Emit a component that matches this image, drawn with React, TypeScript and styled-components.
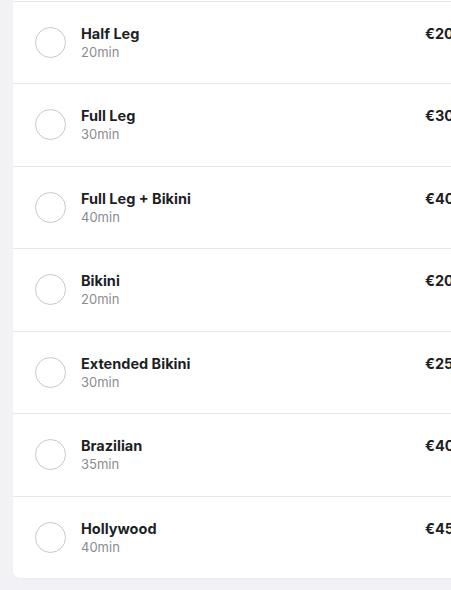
import React from "react";
import styled, { createGlobalStyle } from "styled-components";

const Global = createGlobalStyle`
  html, body {
    margin: 0;
    padding: 0;
    background: #f2f2f6;
    overflow: hidden;
  }
`;

const Page = styled.div`
  width: 451px;
  overflow: hidden;
  padding: 0 0 12px 13px;
  box-sizing: border-box;
  font-family: "Inter", "Noto Sans", sans-serif;
`;

const Card = styled.div`
  width: 470px;
  background: #ffffff;
  border-radius: 0 0 7px 7px;
  padding-top: 1px;
  box-shadow: 0 1px 2px rgba(0, 0, 0, 0.03);
`;

const Row = styled.div`
  display: flex;
  align-items: flex-start;
  height: 81.43px;
  border-top: 1px solid #e7e7ea;
  box-sizing: content-box;
`;

const Radio = styled.span`
  flex: none;
  width: 29px;
  height: 29px;
  border: 1.3px solid #c9c9cc;
  border-radius: 50%;
  margin: 25px 15px 0 22px;
`;

const Info = styled.div`
  flex: 1;
  display: flex;
  flex-direction: column;
  padding-top: 22px;
`;

const Title = styled.span`
  font-size: 14.5px;
  font-weight: 700;
  color: #1d1f26;
  line-height: 19px;
`;

const Duration = styled.span`
  font-size: 13px;
  color: #8b8b90;
  line-height: 18px;
`;

const Price = styled.span`
  width: 58px;
  padding-top: 22px;
  font-size: 14.5px;
  font-weight: 700;
  color: #1d1f26;
  line-height: 19px;
`;

const services = [
  { name: "Half Leg", time: "20min", price: "€20" },
  { name: "Full Leg", time: "30min", price: "€30" },
  { name: "Full Leg + Bikini", time: "40min", price: "€40" },
  { name: "Bikini", time: "20min", price: "€20" },
  { name: "Extended Bikini", time: "30min", price: "€25" },
  { name: "Brazilian", time: "35min", price: "€40" },
  { name: "Hollywood", time: "40min", price: "€45" },
];

const App = () => {
  return (
    <>
      <Global />
      <Page>
        <Card>
          {services.map((s) => (
            <Row key={s.name}>
              <Radio />
              <Info>
                <Title>{s.name}</Title>
                <Duration>{s.time}</Duration>
              </Info>
              <Price>{s.price}</Price>
            </Row>
          ))}
        </Card>
      </Page>
    </>
  );
};

export default App;
